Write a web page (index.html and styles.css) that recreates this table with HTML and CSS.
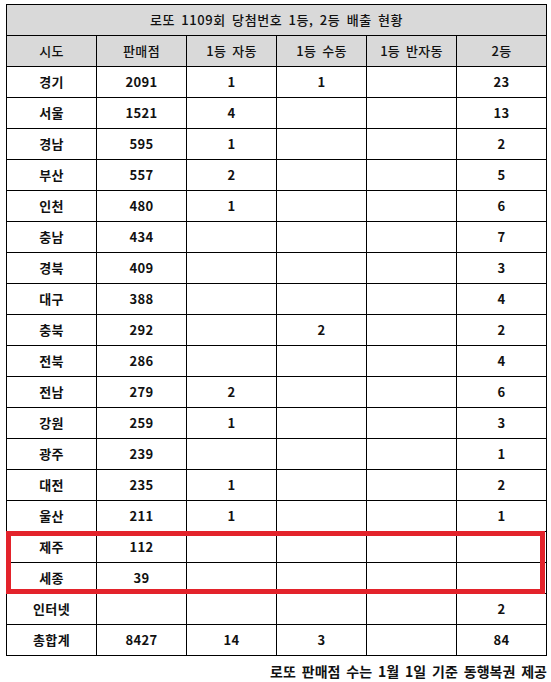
FILE: index.html
```html
<!DOCTYPE html>
<html lang="ko">
<head>
<meta charset="utf-8">
<link rel="stylesheet" href="styles.css">
</head>
<body>
<div class="wrap">
  <div class="table-box">
    <table class="lotto">
      <colgroup>
        <col class="c"><col class="c"><col class="c"><col class="c"><col class="c"><col class="c">
      </colgroup>
      <thead>
        <tr class="title"><th colspan="6">로또 1109회 당첨번호 1등, 2등 배출 현황</th></tr>
        <tr class="head"><th>시도</th><th>판매점</th><th>1등 자동</th><th>1등 수동</th><th>1등 반자동</th><th>2등</th></tr>
      </thead>
      <tbody>
        <tr><td>경기</td><td>2091</td><td>1</td><td>1</td><td></td><td>23</td></tr>
        <tr><td>서울</td><td>1521</td><td>4</td><td></td><td></td><td>13</td></tr>
        <tr><td>경남</td><td>595</td><td>1</td><td></td><td></td><td>2</td></tr>
        <tr><td>부산</td><td>557</td><td>2</td><td></td><td></td><td>5</td></tr>
        <tr><td>인천</td><td>480</td><td>1</td><td></td><td></td><td>6</td></tr>
        <tr><td>충남</td><td>434</td><td></td><td></td><td></td><td>7</td></tr>
        <tr><td>경북</td><td>409</td><td></td><td></td><td></td><td>3</td></tr>
        <tr><td>대구</td><td>388</td><td></td><td></td><td></td><td>4</td></tr>
        <tr><td>충북</td><td>292</td><td></td><td>2</td><td></td><td>2</td></tr>
        <tr><td>전북</td><td>286</td><td></td><td></td><td></td><td>4</td></tr>
        <tr><td>전남</td><td>279</td><td>2</td><td></td><td></td><td>6</td></tr>
        <tr><td>강원</td><td>259</td><td>1</td><td></td><td></td><td>3</td></tr>
        <tr><td>광주</td><td>239</td><td></td><td></td><td></td><td>1</td></tr>
        <tr><td>대전</td><td>235</td><td>1</td><td></td><td></td><td>2</td></tr>
        <tr><td>울산</td><td>211</td><td>1</td><td></td><td></td><td>1</td></tr>
        <tr><td>제주</td><td>112</td><td></td><td></td><td></td><td></td></tr>
        <tr><td>세종</td><td>39</td><td></td><td></td><td></td><td></td></tr>
        <tr><td>인터넷</td><td></td><td></td><td></td><td></td><td>2</td></tr>
        <tr><td>총합계</td><td>8427</td><td>14</td><td>3</td><td></td><td>84</td></tr>
      </tbody>
    </table>
    <div class="highlight"></div>
  </div>
  <p class="note">로또 판매점 수는 1월 1일 기준 동행복권 제공</p>
</div>
</body>
</html>
```
FILE: styles.css
```css
html, body {
  margin: 0;
  padding: 0;
  background: #fff;
}
body {
  font-family: "Noto Sans CJK KR", "Noto Sans", sans-serif;
  color: #111;
}
.wrap {
  padding: 4px 0 0 6px;
  width: 541px;
}
.table-box {
  position: relative;
}
.lotto {
  border-collapse: collapse;
  table-layout: fixed;
  width: 541px;
  font-size: 13px;
}
.lotto .c {
  width: 90px;
}
.lotto th,
.lotto td {
  border: 1px solid #000;
  height: 30px;
  padding: 0;
  text-align: center;
  vertical-align: middle;
  line-height: 16px;
  letter-spacing: 0.3px;
  word-spacing: 2px;
}
.lotto th {
  background: #d9d9d9;
  font-weight: 500;
}
.lotto .title th {
  letter-spacing: 0.6px;
  word-spacing: 2px;
}
.lotto td {
  font-weight: 700;
}
.highlight {
  position: absolute;
  left: 0;
  top: 527px;
  width: 529px;
  height: 53px;
  border: 5px solid #e3232b;
}
.note {
  margin: 6px 0 0;
  text-align: right;
  font-size: 14px;
  font-weight: 700;
  line-height: 19px;
  word-spacing: 2px;
}
```
